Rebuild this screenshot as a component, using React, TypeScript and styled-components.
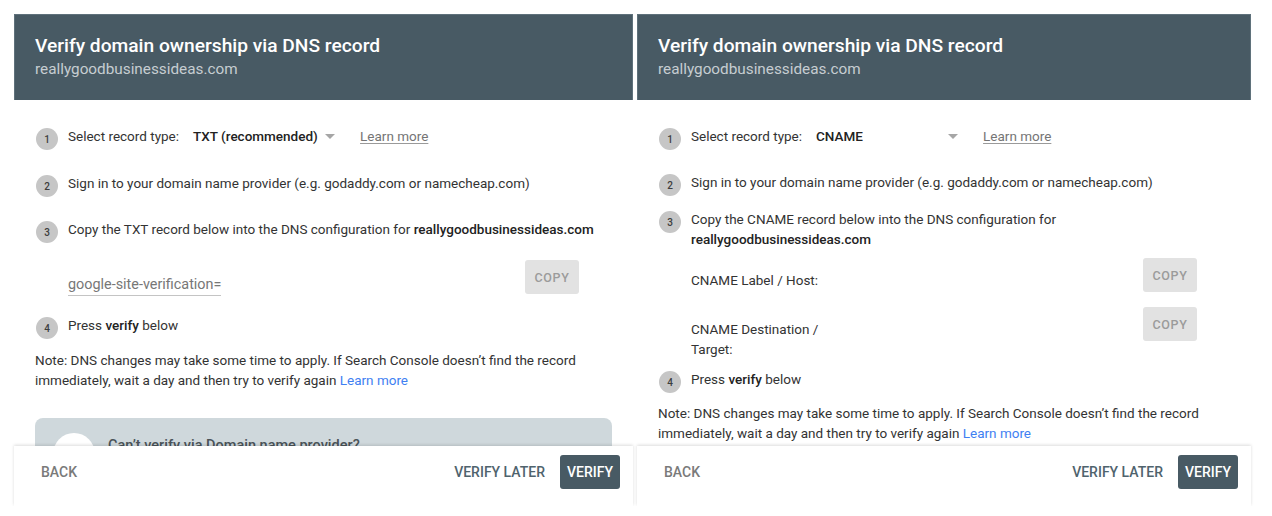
import styled, { createGlobalStyle } from 'styled-components';

const GlobalStyle = createGlobalStyle`
  body {
    margin: 0;
    background: #fff;
    font-family: Roboto, 'Noto Sans', Arial, sans-serif;
  }
`;

type Mode = 'txt' | 'cname';

function Wizard({ mode, width }: { mode: Mode; width: number }) {
  const isTxt = mode === 'txt';
  return (
    <Panel $w={width}>
      <Header>
        <Title>Verify domain ownership via DNS record</Title>
        <Subtitle>reallygoodbusinessideas.com</Subtitle>
      </Header>
      <Body>
        <Step $mt={0}>
          <Num>1</Num>
          <StepText>
            <InlineRow>
              Select record type:
              <Select>
                <strong>{isTxt ? 'TXT (recommended)' : 'CNAME'}</strong>
                <Caret />
              </Select>
              <GreyLink>Learn more</GreyLink>
            </InlineRow>
          </StepText>
        </Step>
        <Step $mt={isTxt ? 23 : 22}>
          <Num>2</Num>
          <StepText>Sign in to your domain name provider (e.g. godaddy.com or namecheap.com)</StepText>
        </Step>
        {isTxt ? (
          <>
            <Step $mt={22}>
              <Num>3</Num>
              <StepText>
                Copy the TXT record below into the DNS configuration for{' '}
                <strong>reallygoodbusinessideas.com</strong>
              </StepText>
            </Step>
            <RecordRow $mt={17}>
              <Field>google-site-verification=</Field>
              <CopyButton>COPY</CopyButton>
            </RecordRow>
            <Step $mt={21}>
              <Num>4</Num>
              <StepText>
                Press <strong>verify</strong> below
              </StepText>
            </Step>
            <Note $mt={11}>
              Note: DNS changes may take some time to apply. If Search Console doesn’t find the record
              immediately, wait a day and then try to verify again <BlueLink>Learn more</BlueLink>
            </Note>
            <Card>
              <Avatar />
              <CardTitle>Can’t verify via Domain name provider?</CardTitle>
            </Card>
          </>
        ) : (
          <>
            <Step $mt={13}>
              <Num>3</Num>
              <StepText>
                Copy the CNAME record below into the DNS configuration for
                <br />
                <strong>reallygoodbusinessideas.com</strong>
              </StepText>
            </Step>
            <RecordRow $mt={9} $top>
              <Label>CNAME Label / Host:</Label>
              <CopyButton>COPY</CopyButton>
            </RecordRow>
            <RecordRow $mt={15} $top>
              <Label>CNAME Destination / Target:</Label>
              <CopyButton>COPY</CopyButton>
            </RecordRow>
            <Step $mt={10}>
              <Num>4</Num>
              <StepText>
                Press <strong>verify</strong> below
              </StepText>
            </Step>
            <Note $mt={10}>
              Note: DNS changes may take some time to apply. If Search Console doesn’t find the record
              immediately, wait a day and then try to verify again <BlueLink>Learn more</BlueLink>
            </Note>
          </>
        )}
      </Body>
      <Footer>
        <TextButton $muted>BACK</TextButton>
        <Spacer />
        <TextButton>VERIFY LATER</TextButton>
        <PrimaryButton>VERIFY</PrimaryButton>
      </Footer>
    </Panel>
  );
}

export default function App() {
  return (
    <>
      <GlobalStyle />
      <Page>
        <Wizard mode='txt' width={619} />
        <Wizard mode='cname' width={614} />
      </Page>
    </>
  );
}

const Page = styled.div`
  display: flex;
  gap: 4px;
  padding: 14px 0 0 14px;
`;

const Panel = styled.section<{ $w: number }>`
  width: ${(p) => p.$w}px;
  height: 492px;
  display: flex;
  flex-direction: column;
  background: #fff;
`;

const Header = styled.header`
  flex: none;
  height: 86px;
  box-sizing: border-box;
  padding: 21px 21px 0;
  background: #485a64;
  box-shadow: inset 0 1px 0 #5f717b, inset 1px 0 0 #5f717b, inset -1px 0 0 #5f717b;
`;

const Title = styled.div`
  font-size: 19.2px;
  font-weight: 500;
  line-height: 22px;
  color: #fff;
`;

const Subtitle = styled.div`
  font-size: 15.3px;
  line-height: 20px;
  margin-top: 2px;
  color: #c6cdd1;
`;

const Body = styled.div`
  flex: 1;
  min-height: 0;
  overflow: hidden;
  padding: 26px 21px 0;
  color: #333;
`;

const Step = styled.div<{ $mt: number }>`
  display: flex;
  align-items: flex-start;
  gap: 10px;
  padding-left: 1px;
  margin-top: ${(p) => p.$mt}px;
`;

const Num = styled.span`
  flex: none;
  width: 22px;
  height: 22px;
  margin-top: 2px;
  border-radius: 50%;
  background: #c6c6c6;
  color: #3d3d3d;
  font-size: 10px;
  font-weight: 500;
  display: flex;
  align-items: center;
  justify-content: center;
`;

const StepText = styled.div`
  font-size: 13.5px;
  line-height: 20px;
  color: #333;

  strong {
    font-weight: 500;
    color: #222;
  }
`;

const InlineRow = styled.div`
  display: flex;
  align-items: center;
`;

const Select = styled.span`
  display: inline-flex;
  align-items: center;
  justify-content: space-between;
  width: 142px;
  margin-left: 14px;
`;

const Caret = styled.span`
  width: 0;
  height: 0;
  border-left: 5px solid transparent;
  border-right: 5px solid transparent;
  border-top: 5px solid #a6a6a6;
`;

const GreyLink = styled.a`
  margin-left: 25px;
  color: #757575;
  text-decoration: underline;
  text-decoration-color: #9a9a9a;
  text-underline-offset: 2px;
`;

const RecordRow = styled.div<{ $mt: number; $top?: boolean }>`
  display: flex;
  justify-content: space-between;
  align-items: ${(p) => (p.$top ? 'flex-start' : 'flex-end')};
  margin: ${(p) => p.$mt}px 33px 0 33px;
`;

const Field = styled.div`
  font-size: 14.4px;
  line-height: 20px;
  color: #777;
  border-bottom: 1px solid #c4c4c4;
  margin-bottom: -2px;
`;

const Label = styled.div`
  width: 140px;
  margin-top: 12px;
  font-size: 13.5px;
  line-height: 20px;
  color: #333;
`;

const CopyButton = styled.button`
  width: 54px;
  height: 34px;
  border: none;
  border-radius: 3px;
  background: #e2e2e2;
  color: #9b9b9b;
  font-family: inherit;
  font-size: 12.5px;
  font-weight: 500;
  letter-spacing: 0.6px;
  padding: 0;
`;

const Note = styled.p<{ $mt: number }>`
  margin: ${(p) => p.$mt}px 0 0;
  font-size: 13.5px;
  line-height: 20px;
  color: #333;
`;

const BlueLink = styled.a`
  color: #3f7ff2;
`;

const Card = styled.div`
  margin-top: 28px;
  height: 110px;
  border-radius: 8px;
  background: #cfd8dc;
  display: flex;
  align-items: flex-start;
  gap: 13px;
  padding: 15px 18px;
`;

const Avatar = styled.div`
  flex: none;
  width: 42px;
  height: 42px;
  border-radius: 50%;
  background: #fff;
`;

const CardTitle = styled.div`
  margin-top: 3px;
  font-size: 14.5px;
  font-weight: 500;
  line-height: 20px;
  color: #4a5358;
`;

const Footer = styled.footer`
  flex: none;
  position: relative;
  z-index: 1;
  height: 60px;
  box-sizing: border-box;
  padding: 9px 13px 0 19px;
  display: flex;
  align-items: flex-start;
  background: #fff;
  box-shadow: 0 -1px 3px rgba(0, 0, 0, 0.14);
`;

const Spacer = styled.div`
  flex: 1;
`;

const TextButton = styled.button<{ $muted?: boolean }>`
  height: 34px;
  padding: 0 8px;
  margin-right: 7px;
  border: none;
  background: transparent;
  font-family: inherit;
  font-size: 14px;
  font-weight: 500;
  color: ${(p) => (p.$muted ? '#7a7a7a' : '#4f636d')};
`;

const PrimaryButton = styled.button`
  height: 34px;
  padding: 0 7px;
  border: none;
  border-radius: 3px;
  background: #485a64;
  color: #fff;
  font-family: inherit;
  font-size: 14px;
  font-weight: 500;
`;
